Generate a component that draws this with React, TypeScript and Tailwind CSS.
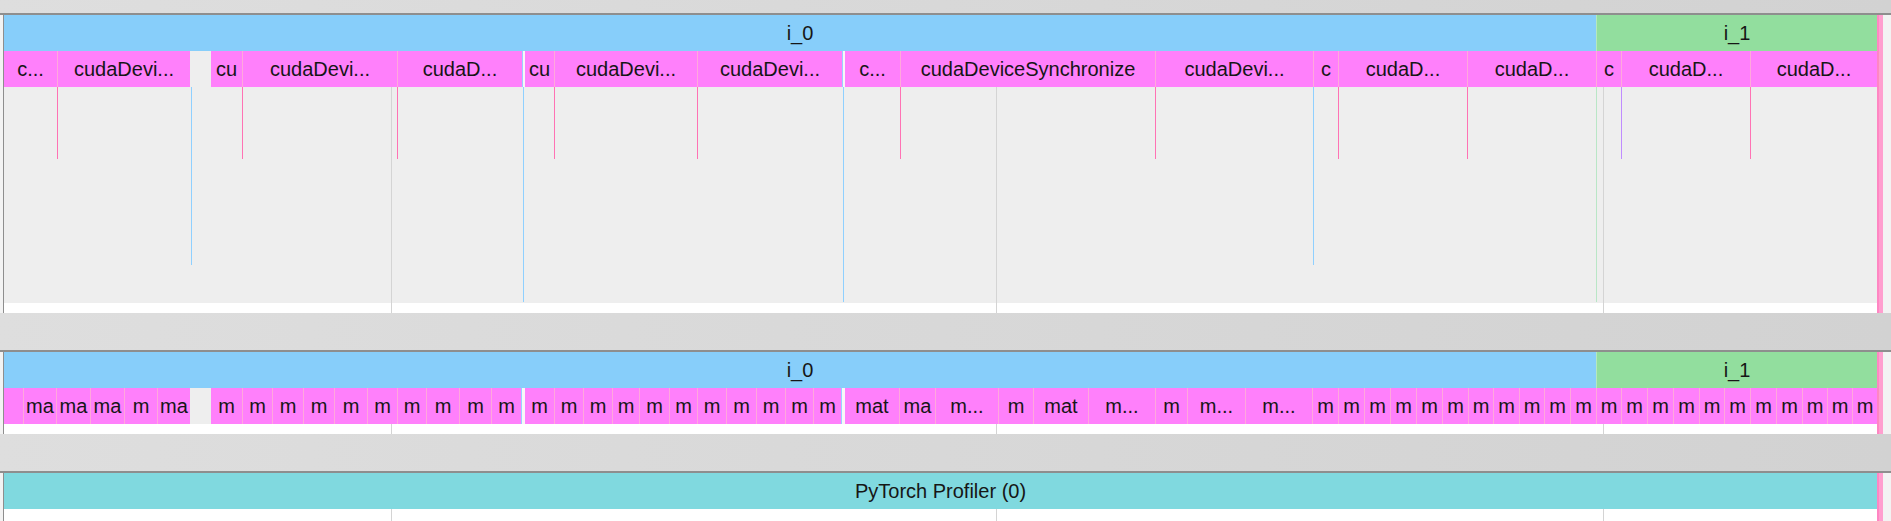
import type React from 'react'

type Slice = [number, number, string]

// x positions are page pixels; the canvas starts at x = 4
const X0 = 4

const cudaRow: Slice[] = [
	[4, 57, 'c...'],
	[57, 190, 'cudaDevi...'],
	[190, 211, '#gap'],
	[211, 242, 'cu'],
	[242, 397, 'cudaDevi...'],
	[397, 522, 'cudaD...'],
	[522, 525, '#thin'],
	[525, 554, 'cu'],
	[554, 697, 'cudaDevi...'],
	[697, 842, 'cudaDevi...'],
	[842, 845, '#thin'],
	[845, 900, 'c...'],
	[900, 1155, 'cudaDeviceSynchronize'],
	[1155, 1313, 'cudaDevi...'],
	[1313, 1338, 'c'],
	[1338, 1467, 'cudaD...'],
	[1467, 1596, 'cudaD...'],
	[1596, 1621, 'c'],
	[1621, 1750, 'cudaD...'],
	[1750, 1877, 'cudaD...'],
]

const ms = (xs: number[]): Slice[] =>
	xs.slice(0, -1).map((x, i) => [x, xs[i + 1], 'm'] as Slice)

const matmulRow: Slice[] = [
	[4, 23, ''],
	[23, 56, 'ma'],
	[56, 90, 'ma'],
	[90, 124, 'ma'],
	[124, 157, 'm'],
	[157, 190, 'ma'],
	[190, 211, '#gap'],
	...ms([211, 242, 272, 303, 334, 367, 397, 426, 459, 491, 521]),
	[521, 525, '#thin'],
	...ms([525, 554, 583, 612, 639, 669, 697, 726, 756, 785, 813, 841]),
	[841, 845, '#thin'],
	[845, 899, 'mat'],
	[899, 935, 'ma'],
	[935, 998, 'm...'],
	[998, 1033, 'm'],
	[1033, 1088, 'mat'],
	[1088, 1155, 'm...'],
	[1155, 1187, 'm'],
	[1187, 1245, 'm...'],
	[1245, 1312, 'm...'],
	...ms([
		1312, 1338, 1364, 1390, 1416, 1442, 1468, 1493, 1519, 1544, 1570, 1596,
		1621, 1647, 1673, 1699, 1724, 1750, 1776, 1802, 1827, 1852, 1877,
	]),
]

// flow arrows / child markers under the first track (x, bottom y on page, colour)
const marks: [number, number, string][] = [
	[57, 159, '#ff72b4'],
	[242, 159, '#ff72b4'],
	[397, 159, '#ff72b4'],
	[554, 159, '#ff72b4'],
	[697, 159, '#ff72b4'],
	[900, 159, '#ff72b4'],
	[1155, 159, '#ff72b4'],
	[1338, 159, '#ff72b4'],
	[1467, 159, '#ff72b4'],
	[1621, 159, '#c08cff'],
	[1750, 159, '#ff72b4'],
	[191, 265, '#8fd0ff'],
	[523, 302, '#8fd0ff'],
	[843, 302, '#8fd0ff'],
	[1313, 265, '#8fd0ff'],
	[1596, 302, '#b9e6c6'],
]

const gridXs = [391, 996, 1603]

const SliceRow = ({ slices }: { slices: Slice[] }) => (
	<div className="flex h-[36px]">
		{slices.map(([a, b, label], i) =>
			label === '#gap' ? (
				<div key={i} className="shrink-0 bg-[#eeeeee]" style={{ width: b - a }} />
			) : label === '#thin' ? (
				<div key={i} className="shrink-0 border-l border-[#9ccfff] bg-[#f7f7f7]" style={{ width: b - a }} />
			) : (
				<div
					key={i}
					className={`flex shrink-0 items-center justify-center overflow-hidden whitespace-nowrap bg-[#ff80fb] ${
						i > 0 && slices[i - 1][2][0] !== '#' ? 'border-l border-[#ffa8dc]' : ''
					}`}
					style={{ width: b - a }}
				>
					{label}
				</div>
			),
		)}
	</div>
)

const IterRow = () => (
	<div className="flex h-[36px]">
		<div className="flex w-[1592px] shrink-0 items-center justify-center bg-[#87cefa]">i_0</div>
		<div className="flex w-[281px] shrink-0 items-center justify-center border-l border-[#b6e8be] bg-[#92de9e]">
			i_1
		</div>
	</div>
)

const GridLines = ({ top, height }: { top: number; height: number }) => (
	<>
		{gridXs.map(x => (
			<div
				key={x}
				className="absolute w-px bg-[#d4d4d4]"
				style={{ left: x - X0, top, height }}
			/>
		))}
	</>
)

const Track: React.FC<{ bandH: 'short' | 'full'; children: React.ReactNode }> = ({
	bandH,
	children,
}) => (
	<div className="flex flex-col">
		<div
			className={`bg-linear-to-r from-[#dedede] to-[#d2d2d2] ${
				bandH === 'short' ? 'h-[13px]' : 'h-[37px]'
			}`}
		/>
		<div className="h-[2px] bg-[#8e8e8e]" />
		<div className="flex">
			<div className="w-[3px] shrink-0 bg-[#f3f3f3]" />
			<div className="w-px shrink-0 bg-[#8e8e8e]" />
			<div className="relative w-[1873px] shrink-0 bg-white">{children}</div>
			<div className="flex w-[6px] shrink-0">
				<div className="w-[2px] bg-[#ff86c3]" />
				<div className="flex-1 bg-[#ff9fcf]" />
			</div>
			<div className="flex-1 bg-[#f3f3f3]" />
		</div>
	</div>
)

export default function App() {
	return (
		<div className="h-[521px] w-[1891px] overflow-hidden bg-white font-['Liberation_Sans',Arial,sans-serif] text-[20px] leading-none text-[#161616]">
			<Track bandH="short">
				<IterRow />
				<SliceRow slices={cudaRow} />
				<div className="h-[216px] bg-[#eeeeee]" />
				<div className="h-[10px] bg-white" />
				<GridLines top={72} height={226} />
				{marks.map(([x, y2, color], i) => (
					<div
						key={i}
						className="absolute top-[72px] w-px"
						style={{ left: x - X0, height: y2 - 87, backgroundColor: color }}
					/>
				))}
			</Track>
			<Track bandH="full">
				<IterRow />
				<SliceRow slices={matmulRow} />
				<div className="h-[10px] bg-white" />
				<GridLines top={72} height={10} />
			</Track>
			<Track bandH="full">
				<div className="flex h-[36px] items-center justify-center bg-[#80d9df]">
					PyTorch Profiler (0)
				</div>
				<div className="h-[12px] bg-white" />
				<GridLines top={36} height={12} />
			</Track>
		</div>
	)
}
